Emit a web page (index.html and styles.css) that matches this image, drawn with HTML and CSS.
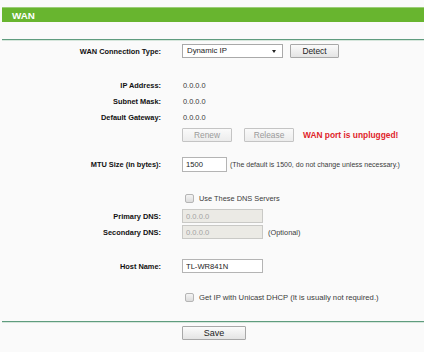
FILE: index.html
```html
<!DOCTYPE html>
<html lang="en">
<head>
  <meta charset="UTF-8" />
  <title>WAN</title>
  <link rel="stylesheet" href="styles.css">
</head>
<body>
  <div class="title">WAN</div>
  <div class="rule"></div>

  <div class="row first">
    <span class="label">WAN Connection Type:</span>
    <span class="value">
      <span class="select">Dynamic IP<span class="arrow"></span></span>
      <button class="btn detect">Detect</button>
    </span>
  </div>

  <div class="row gap-big">
    <span class="label">IP Address:</span>
    <span class="value text">0.0.0.0</span>
  </div>
  <div class="row">
    <span class="label">Subnet Mask:</span>
    <span class="value text">0.0.0.0</span>
  </div>
  <div class="row">
    <span class="label">Default Gateway:</span>
    <span class="value text">0.0.0.0</span>
  </div>
  <div class="row gap-sm">
    <span class="label"></span>
    <span class="value">
      <button class="btn off renew" disabled>Renew</button>
      <button class="btn off release" disabled>Release</button>
      <span class="warn">WAN port is unplugged!</span>
    </span>
  </div>

  <div class="row gap-mid">
    <span class="label">MTU Size (in bytes):</span>
    <span class="value">
      <input class="field mtu" type="text" value="1500">
      <span class="note">(The default is 1500, do not change unless necessary.)</span>
    </span>
  </div>

  <div class="row gap-big">
    <span class="label"></span>
    <span class="value check"><span class="cb"></span>Use These DNS Servers</span>
  </div>
  <div class="row gap-sm">
    <span class="label">Primary DNS:</span>
    <span class="value"><input class="field dns" type="text" value="0.0.0.0" disabled></span>
  </div>
  <div class="row">
    <span class="label">Secondary DNS:</span>
    <span class="value">
      <input class="field dns" type="text" value="0.0.0.0" disabled>
      <span class="note opt">(Optional)</span>
    </span>
  </div>

  <div class="row gap-big">
    <span class="label">Host Name:</span>
    <span class="value"><input class="field host" type="text" value="TL-WR841N"></span>
  </div>

  <div class="row gap-unicast">
    <span class="label"></span>
    <span class="value check unicast"><span class="cb"></span>Get IP with Unicast DHCP (It is usually not required.)</span>
  </div>

  <div class="rule bottom"></div>
  <div class="row save-row">
    <span class="label"></span>
    <span class="value"><button class="btn save">Save</button></span>
  </div>
</body>
</html>
```

FILE: styles.css
```css
* { box-sizing: border-box; }
html, body {
  margin: 0; padding: 0;
  background: #fafafa;
  font-family: "Liberation Sans", Arial, sans-serif;
  font-size: 7.4px; color: #333;
}
.title {
  margin: 7px 0 0 2px; height: 15px; line-height: 15px;
  padding-left: 10px;
  background: #68b52f; border-top: 1px solid #9ccd78;
  color: #fff; font-weight: bold; font-size: 9.8px;
}
.rule {
  margin: 17px 0 0 2px; height: 2px;
  border-top: 1px solid #5f9c7e; background: #d6e6dc;
}
.rule.bottom { margin-top: 16px; }

.row {
  display: grid; grid-template-columns: 161px 1fr; column-gap: 21px;
  align-items: center; height: 16px;
}
.row.first { margin-top: 2px; }
.gap-big { margin-top: 18px; }
.gap-mid { margin-top: 13px; }
.gap-sm { margin-top: 2px; }
.gap-unicast { margin-top: 15px; }
.save-row { margin-top: 2px; }

.label { text-align: right; font-weight: bold; color: #111; }
.value { display: flex; align-items: center; }
.text { padding-left: 1px; color: #3a3a3a; }

.select {
  position: relative; width: 101px; height: 14px; line-height: 12px;
  padding-left: 4px; background: #fff; border: 1px solid #a9a9a9;
  color: #222; font-size: 7.8px;
}
.arrow {
  position: absolute; right: 6px; top: 5px;
  border-left: 2px solid transparent; border-right: 2px solid transparent;
  border-top: 3px solid #222;
}

.btn {
  height: 14px; padding: 0; margin: 0;
  font-family: inherit; font-size: 8.4px; color: #222;
  background: linear-gradient(#fbfbfb, #e4e4e4);
  border: 1px solid #a8a8a8; border-radius: 1px;
}
.detect { width: 49px; margin-left: 7px; }
.off { width: 50px; color: #9a9a9a; border-color: #c4c4c4; background: linear-gradient(#fafafa, #ececec); }
.release { margin-left: 12px; }
.warn { margin-left: 9px; color: #e0242a; font-weight: bold; font-size: 8.4px; }
.save { width: 64px; font-size: 9px; }

.field {
  height: 15px; padding: 0 0 0 3px; margin: 0;
  font-family: inherit; font-size: 7.6px; color: #222;
  background: #fff; border: 1px solid #b4b4b4; border-radius: 0;
}
.mtu { width: 45px; }
.dns, .host { width: 81px; height: 14px; }
.dns { background: #ebeae5; color: #a3a3a3; border-color: #c9c9c6; }
.note { margin-left: 3px; color: #3a3a3a; font-size: 7px; }
.opt { margin-left: 5px; font-size: 7.4px; }

.check { padding-left: 3px; color: #3a3a3a; }
.unicast { font-size: 7.7px; }
.cb {
  width: 9px; height: 9px; margin-right: 5px;
  border: 1px solid #b5b5b5; border-radius: 2px;
  background: linear-gradient(#f4f4f4, #dcdcdc);
}
```
